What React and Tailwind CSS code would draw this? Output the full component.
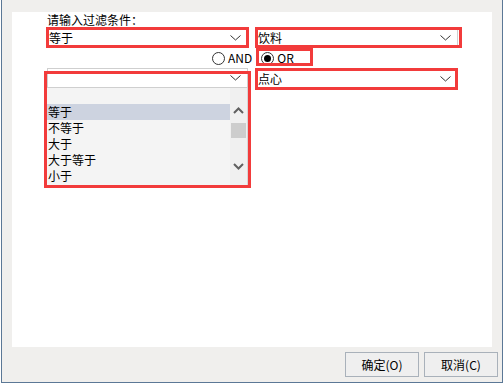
const font = { fontFamily: '"Noto Sans CJK SC", "Microsoft YaHei", sans-serif' };

const Chevron = () => (
  <svg width="11" height="6" viewBox="0 0 11 6" className="shrink-0">
    <polyline points="0.5,0.5 5.5,5 10.5,0.5" fill="none" stroke="#333" strokeWidth="1" />
  </svg>
);

const Combo = ({ text, className = '' }) => (
  <div className={`flex items-center justify-between bg-white border border-[#cfcfcf] pl-[1px] pr-[6px] ${className}`}>
    <span className="text-[12px] leading-none text-black">{text}</span>
    <Chevron />
  </div>
);

const Radio = ({ label, checked }) => (
  <div className="flex items-center gap-[3px]">
    <div className="w-[13px] h-[13px] rounded-full border border-[#333] bg-white flex items-center justify-center">
      {checked && <div className="w-[7px] h-[7px] rounded-full bg-black" />}
    </div>
    <span className="text-[12px] leading-none text-black">{label}</span>
  </div>
);

const items = ['', '等于', '不等于', '大于', '大于等于', '小于'];

const Red = ({ className }) => (
  <div className={`absolute border-[3px] border-[#f23b3b] pointer-events-none ${className}`} />
);

export default function App() {
  return (
    <div className="w-[504px] h-[384px] bg-white" style={font}>
      <div className="ml-[1px] w-[502px] h-[383px] bg-[#f0efed] border-l border-r border-b border-[#5b7896] pt-[12px] pl-[10px]">
        <div className="relative w-[480px] h-[335px] bg-white">
          <div className="pl-[35px]">
            <div className="h-[16px] leading-[16px] text-[12px] text-black">请输入过滤条件：</div>

            <div className="flex gap-[8px]">
              <Combo text="等于" className="w-[201px] h-[20px]" />
              <Combo text="饮料" className="w-[202px] h-[20px]" />
            </div>

            <div className="flex items-center h-[20px] pl-[165px] gap-[9px]">
              <Radio label="AND" />
              <Radio label="OR" checked />
            </div>

            <div className="flex gap-[8px] items-start">
              <div className="w-[201px]">
                <Combo text="" className="w-full h-[20px]" />
                <div className="flex h-[97px] bg-[#f4f4f4] border-r border-[#d6d6d6]">
                  <div className="flex-1 flex flex-col">
                    {items.map((it, i) => (
                      <div
                        key={i}
                        className={`h-[16px] leading-[16px] pl-[1px] text-[12px] text-black ${it === '等于' ? 'bg-[#cdd3e0]' : ''}`}
                      >
                        {it}
                      </div>
                    ))}
                  </div>
                  <div className="w-[17px] bg-[#f0f0f0] flex flex-col items-center pt-[19px]">
                    <svg width="11" height="7" viewBox="0 0 11 7">
                      <polyline points="1,6 5.5,1.5 10,6" fill="none" stroke="#606060" strokeWidth="2" />
                    </svg>
                    <div className="mt-[9px] w-[15px] h-[15px] bg-[#cdcdcd]" />
                    <svg width="11" height="7" viewBox="0 0 11 7" className="mt-[25px]">
                      <polyline points="1,1 5.5,5.5 10,1" fill="none" stroke="#606060" strokeWidth="2" />
                    </svg>
                  </div>
                </div>
              </div>
              <Combo text="点心" className="w-[202px] h-[20px] mt-[1px]" />
            </div>
          </div>

          <Red className="left-[34px] top-[15px] w-[203px] h-[21px]" />
          <Red className="left-[243px] top-[15px] w-[207px] h-[21px]" />
          <Red className="left-[244px] top-[36px] w-[57px] h-[18px]" />
          <Red className="left-[32px] top-[59px] w-[207px] h-[117px]" />
          <Red className="left-[243px] top-[56px] w-[203px] h-[22px]" />
        </div>

        <div className="flex justify-end gap-[5px] mt-[5px] pr-[4px]">
          <button className="w-[74px] h-[25px] bg-[#efefef] border border-[#a9b1ba] text-[12px] text-black">确定(O)</button>
          <button className="w-[74px] h-[25px] bg-[#efefef] border border-[#a9b1ba] text-[12px] text-black">取消(C)</button>
        </div>
      </div>
    </div>
  );
}
